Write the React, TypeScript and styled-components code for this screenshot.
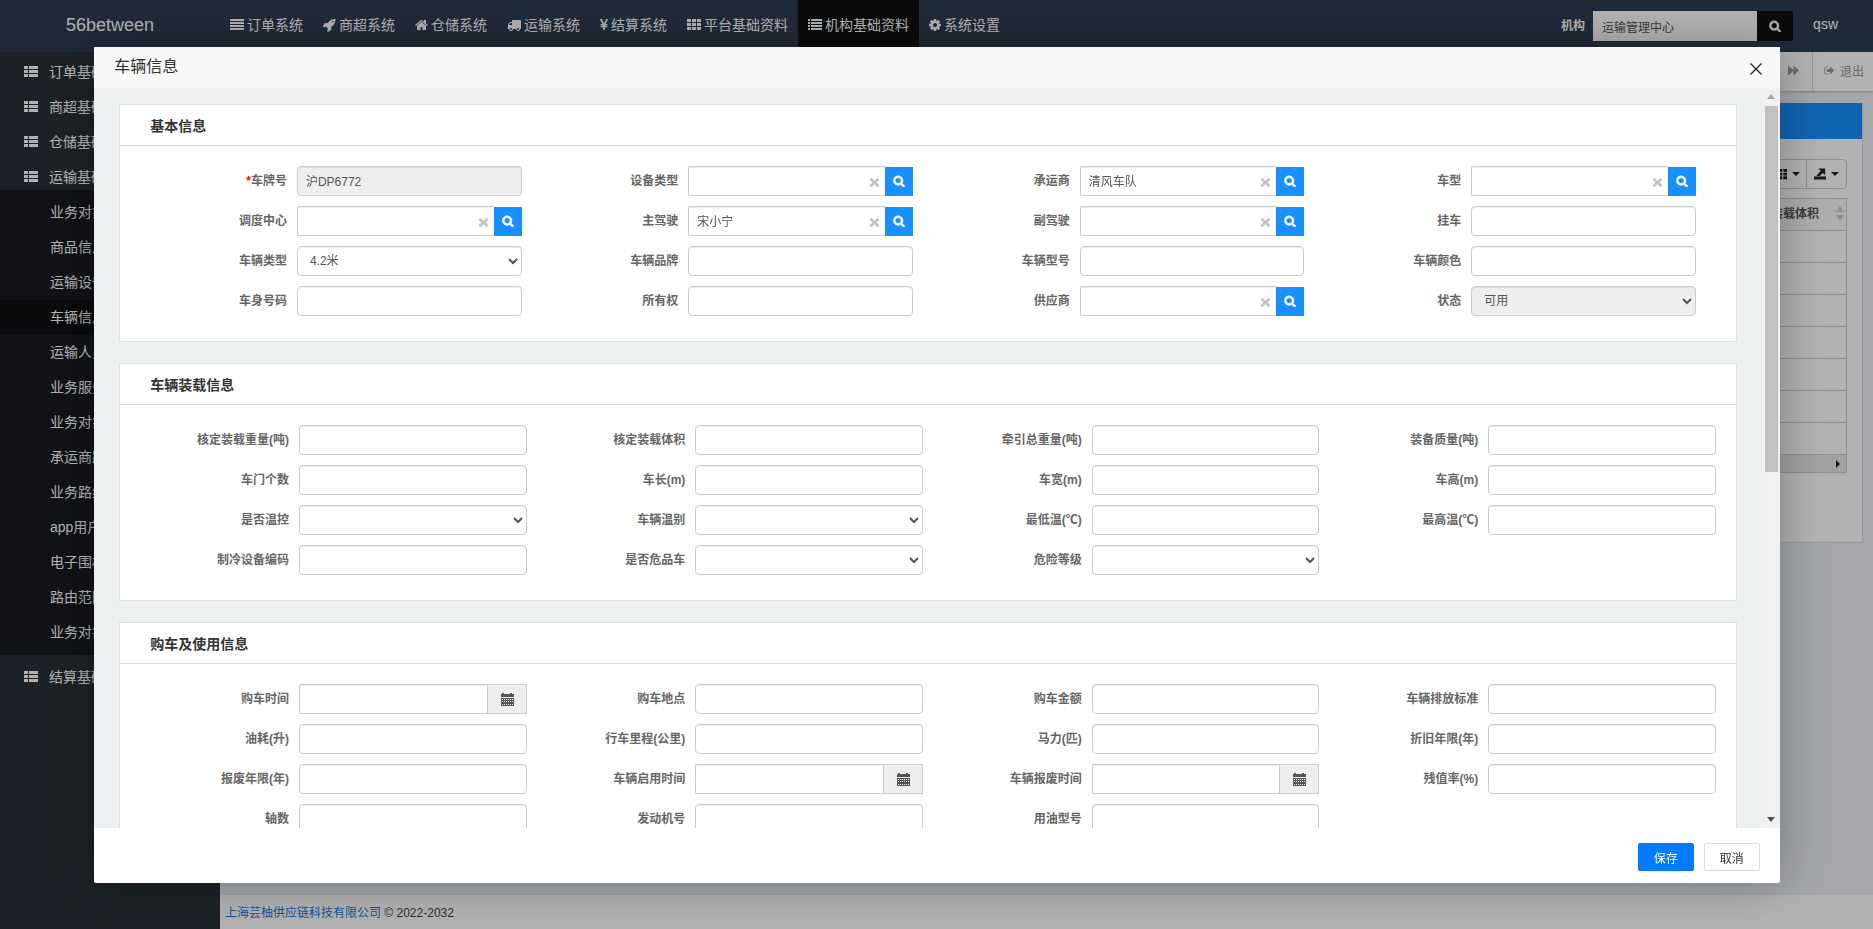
import React, { useState } from "react";
import styled, { createGlobalStyle, css } from "styled-components";

const GlobalStyle = createGlobalStyle`
  * { box-sizing: border-box; }
  body {
    margin: 0;
    font-family: "Liberation Sans", "Noto Sans CJK SC", sans-serif;
    font-size: 12px;
    line-height: 20px;
    color: #333;
    overflow: hidden;
  }
  input, select, button { font-family: inherit; font-size: 12px; }
  ul { list-style: none; margin: 0; padding: 0; }
  a { text-decoration: none; color: inherit; }
`;

/* ---------- icons ---------- */

const PATHS: Record<string, string> = {
  search:
    "M1216 832q0-185-131.5-316.5t-316.5-131.5-316.5 131.5-131.5 316.5 131.5 316.5 316.5 131.5 316.5-131.5 131.5-316.5zm512 832q0 52-38 90t-90 38q-54 0-90-38l-343-342q-179 124-399 124-143 0-273.5-55.5t-225-150-150-225-55.5-273.5 55.5-273.5 150-225 225-150 273.5-55.5 273.5 55.5 225 150 150 225 55.5 273.5q0 220-124 399l343 343q37 37 37 90z",
  lines:
    "M0 128h1792v256H0zM0 512h1792v256H0zM0 896h1792v256H0zM0 1280h1792v256H0z",
  rocket:
    "M1440 448q0-40-28-68t-68-28-68 28-28 68 28 68 68 28 68-28 28-68zm224-288q0 249-75.5 430.5t-253.5 360.5q-81 80-195 176l-20 379q-2 16-16 26l-384 224q-7 4-16 4-12 0-23-9l-64-64q-13-14-8-32l85-276-281-281-276 85q-3 1-9 1-14 0-23-9l-64-64q-17-19-5-39l224-384q10-14 26-16l379-20q96-114 176-195 188-187 358-258t431-71q14 0 24 9.5t10 22.5z",
  home:
    "M1472 992v480q0 26-19 45t-45 19h-384v-384h-256v384h-384q-26 0-45-19t-19-45v-480q0-1 .5-3t.5-3l575-474 575 474q1 2 1 6zm223-69l-62 74q-8 9-21 11h-3q-13 0-21-7l-692-577-692 577q-12 8-24 7-13-2-21-11l-62-74q-8-10-7-23.5t11-21.5l719-599q32-26 76-26t76 26l244 204v-195q0-14 9-23t23-9h192q14 0 23 9t9 23v408l219 182q10 8 11 21.5t-7 23.5z",
  truck:
    "M640 1408q0-52-38-90t-90-38-90 38-38 90 38 90 90 38 90-38 38-90zm-384-512h384v-256h-158q-13 0-22 9l-195 195q-9 9-9 22v30zm1280 512q0-52-38-90t-90-38-90 38-38 90 38 90 90 38 90-38 38-90zm256-1088v1024q0 15-4 26.5t-13.5 18.5-16.5 11.5-23.5 6-22.5 2-25.5 0-22.5-.5q0 106-75 181t-181 75-181-75-75-181h-384q0 106-75 181t-181 75-181-75-75-181h-64q-3 0-22.5.5t-25.5 0-22.5-2-23.5-6-16.5-11.5-13.5-18.5-4-26.5q0-26 19-45t45-19v-320q0-8-.5-35t0-38 2.5-34.5 6.5-37 14-30.5 22.5-30l198-198q19-19 50.5-32t58.5-13h160v-192q0-26 19-45t45-19h1024q26 0 45 19t19 45z",
  yen:
    "M985.5 1536h-172q-13 0-22.5-9t-9.5-23v-330h-288q-13 0-22.5-9t-9.5-23v-103q0-13 9.5-22.5t22.5-9.5h288v-85h-288q-13 0-22.5-9t-9.5-23v-104q0-13 9.5-22.5t22.5-9.5h214l-321-578q-8-16 0-32 10-16 28-16h194q19 0 29 18l215 425q19 38 56 125 10-24 30.5-68t27.5-61l191-420q8-19 29-19h191q17 0 27 16 9 14 1 31l-313 579h215q13 0 22.5 9.5t9.5 22.5v104q0 14-9.5 23t-22.5 9h-290v85h290q13 0 22.5 9.5t9.5 22.5v103q0 14-9.5 23t-22.5 9h-290v330q0 13-9.5 22.5t-22.5 9.5z",
  grid:
    "M0 128h512v384H0zM640 128h512v384H640zM1280 128h512v384h-512zM0 640h512v384H0zM640 640h512v384H640zM1280 640h512v384h-512zM0 1152h512v384H0zM640 1152h512v384H640zM1280 1152h512v384h-512z",
  list:
    "M0 128h256v256H0zM384 128h1408v256H384zM0 512h256v256H0zM384 512h1408v256H384zM0 896h256v256H0zM384 896h1408v256H384zM0 1280h256v256H0zM384 1280h1408v256H384z",
  rows:
    "M0 128h512v384H0zM640 128h1152v384H640zM0 640h512v384H0zM640 640h1152v384H640zM0 1152h512v384H0zM640 1152h1152v384H640z",
  cog:
    "M1152 896q0-106-75-181t-181-75-181 75-75 181 75 181 181 75 181-75 75-181zm512-109v222q0 12-8 23t-20 13l-185 28q-19 54-39 91 35 50 107 138 10 12 10 25t-9 23q-27 37-99 108t-94 71q-12 0-26-9l-138-108q-44 23-91 38-16 136-29 186-7 28-36 28h-222q-14 0-24.5-8.5t-11.5-21.5l-28-184q-49-16-90-37l-141 107q-10 9-25 9-14 0-25-11-126-114-165-168-7-10-7-23 0-12 8-23 15-21 51-66.5t54-70.5q-27-50-41-99l-183-27q-13-2-21-12.5t-8-23.5v-222q0-12 8-23t19-13l186-28q14-46 39-92-40-57-107-138-10-12-10-24 0-10 9-23 26-36 98.5-107.5t94.5-71.5q13 0 26 10l138 107q44-23 91-38 16-136 29-186 7-28 36-28h222q14 0 24.5 8.5t11.5 21.5l28 184q49 16 90 37l142-107q9-9 24-9 13 0 25 10 129 119 165 170 7 8 7 22 0 12-8 23-15 21-51 66.5t-54 70.5q26 50 41 98l183 28q13 2 21 12.5t8 23.5z",
  signOut:
    "M704 1440q0 4 1 20t.5 26.5-3 23.5-10 19.5-20.5 6.5h-320q-119 0-203.5-84.5t-84.5-203.5v-704q0-119 84.5-203.5t203.5-84.5h320q13 0 22.5 9.5t9.5 22.5q0 4 1 20t.5 26.5-3 23.5-10 19.5-20.5 6.5h-320q-66 0-113 47t-47 113v704q0 66 47 113t113 47h312l11.5 1 11.5 3 8 5.5 7 9 2 13.5zm928-544q0 26-19 45l-544 544q-19 19-45 19t-45-19-19-45v-288h-448q-26 0-45-19t-19-45v-384q0-26 19-45t45-19h448v-288q0-26 19-45t45-19 45 19l544 544q19 19 19 45z",
  forward: "M128 192L896 832V192L1664 896L896 1600V960L128 1600z",
  times:
    "M380 140L896 600L1412 140L1720 450L1210 896L1720 1342L1412 1652L896 1192L380 1652L72 1342L582 896L72 450z",
  calendar: [
    "M128 256h128v-128h256v128h768v-128h256v128h256v384H128z",
    "M128 768h1664v1024H128z",
    ...[896, 1152, 1536].flatMap((y) =>
      [256, 512, 768, 1024, 1280, 1536].map((x) => `M${x} ${y}v128h128v-128z`)
    ),
  ].join(""),
  exportArrow:
    "M0 1280h1792v448H0zM640 64h1024v1024L1312 736L864 1184H352L992 416z",
};

const IconSvg = styled.svg<{ $heavy?: boolean }>`
  display: block;
  flex: none;
  fill: currentColor;
  fill-rule: evenodd;
  stroke: currentColor;
  stroke-width: ${(p) => (p.$heavy ? 110 : 0)};
`;

interface IconProps {
  name: string;
  size?: number;
  width?: number;
  heavy?: boolean;
}

function Icon({ name, size = 14, width, heavy }: IconProps) {
  const w = width ?? size;
  const span = (1792 * w) / size;
  return (
    <IconSvg
      width={w}
      height={size}
      viewBox={`${(1792 - span) / 2} 0 ${span} 1792`}
      $heavy={heavy}
      aria-hidden="true"
    >
      <path d={PATHS[name]} />
    </IconSvg>
  );
}

/* ---------- page behind the dialog ---------- */

const Page = styled.div`
  display: flex;
  flex-direction: column;
  height: 100vh;
`;

const Header = styled.header`
  display: flex;
  flex: none;
  height: 52px;
  padding-right: 35px;
  background: #2c3e50;
  color: #fff;
`;

const Brand = styled.a`
  width: 220px;
  line-height: 50px;
  font-size: 18px;
  text-align: center;
`;

const TopNav = styled.nav`
  display: flex;
  flex: 1;
`;

const TopLink = styled.a<{ $active?: boolean }>`
  display: flex;
  align-items: center;
  gap: 3px;
  height: 50px;
  padding: 0 10px;
  font-size: 14px;
  background: ${(p) => (p.$active ? "#101010" : "transparent")};
`;

const OrgSearch = styled.form`
  display: flex;
  align-items: center;
  height: 52px;
`;

const OrgLabel = styled.label`
  margin-right: 8px;
  font-weight: bold;
`;

const OrgInput = styled.input`
  width: 164px;
  height: 30px;
  padding: 0 9px;
  border: 0;
  background: #fff;
  color: #555;
`;

const OrgButton = styled.button`
  display: flex;
  align-items: center;
  justify-content: center;
  width: 36px;
  height: 30px;
  padding: 0;
  border: 0;
  border-radius: 0 3px 3px 0;
  background: #101010;
  color: #fff;
`;

const User = styled.a`
  margin-left: 20px;
  line-height: 48px;
  font-size: 14px;
`;

const Body = styled.div`
  display: flex;
  flex: 1;
  min-height: 0;
`;

const Sidebar = styled.nav`
  width: 220px;
  flex: none;
  padding-top: 7px;
  background: #263238;
  color: #fff;
  font-size: 14px;
`;

const Groups = styled.ul`
  display: flex;
  flex-direction: column;
  gap: 9px;
`;

const GroupLink = styled.a`
  display: flex;
  align-items: center;
  gap: 11px;
  height: 26px;
  padding-left: 24px;
`;

const SubMenu = styled.ul`
  padding: 5px 0;
  background: #181b20;
`;

const SubLink = styled.a<{ $active?: boolean }>`
  display: block;
  padding-left: 50px;
  line-height: 35px;
  background: ${(p) => (p.$active ? "#0e0f12" : "transparent")};
`;

const Main = styled.main`
  display: flex;
  flex: 1;
  flex-direction: column;
  min-width: 0;
  background: #ecf0f5;
`;

const TabStrip = styled.div`
  display: flex;
  justify-content: flex-end;
  flex: none;
  height: 39px;
  background: #fff;
  box-shadow: 0 1px 2px rgba(0, 0, 0, 0.25);
  color: #999;
`;

const TabButton = styled.button`
  display: flex;
  align-items: center;
  gap: 5px;
  padding: 0 9px 3px 11px;
  border: 0;
  border-left: 1px solid #ddd;
  background: transparent;
  color: inherit;
`;

const ScrollTabsButton = styled(TabButton)`
  width: 40px;
  justify-content: center;
`;

const Content = styled.div`
  flex: 1;
  padding: 12px 10px;
`;

const Box = styled.section`
  height: 440px;
  border: 1px solid #ddd;
  border-top: 0;
  background: #fff;
`;

const BoxBar = styled.div`
  height: 36px;
  background: #1890ff;
`;

const BoxBody = styled.div`
  padding: 20px 15px;
`;

const Tools = styled.div`
  display: flex;
  justify-content: flex-end;
  margin-bottom: 9px;
`;

const ToolButton = styled.button`
  display: flex;
  align-items: center;
  justify-content: center;
  gap: 5px;
  width: 41px;
  height: 30px;
  margin-left: -1px;
  padding: 0;
  border: 1px solid #ccc;
  background: #fff;
  color: #222;

  &:last-child {
    border-radius: 0 4px 4px 0;
  }
`;

const Caret = styled.span`
  border: 4px solid transparent;
  border-bottom: 0;
  border-top-color: #222;
`;

const Grid = styled.table`
  width: 100%;
  border-collapse: collapse;
  border: 1px solid #ccc;

  th,
  td {
    height: 32px;
    padding: 0;
    border-bottom: 1px solid #ccc;
  }
  th {
    background: #f9f9f9;
    color: #555;
  }
`;

const HeadCell = styled.div`
  display: flex;
  align-items: center;
  justify-content: flex-end;
  gap: 17px;
  padding: 0 2px 2px 0;
`;

const SortMark = styled.span`
  display: flex;
  flex-direction: column;
  gap: 3px;

  &::before,
  &::after {
    content: "";
    border: 4px solid transparent;
  }
  &::before {
    border-top: 0;
    border-bottom: 6px solid #ccc;
  }
  &::after {
    border-bottom: 0;
    border-top: 6px solid #ccc;
  }
`;

const GridScroll = styled.div`
  display: flex;
  align-items: center;
  justify-content: flex-end;
  height: 18px;
  padding-right: 6px;
  border: 1px solid #ccc;
  border-top: 0;
  background: #e8e8e8;

  &::after {
    content: "";
    border: 4px solid transparent;
    border-right: 0;
    border-left-color: #222;
  }
`;

const Footer = styled.footer`
  flex: none;
  height: 35px;
  padding-left: 5px;
  line-height: 36px;
  border-top: 1px solid #eee;
  background: #fff;
  color: #444;

  a {
    color: #1f77d0;
  }
`;

/* ---------- dialog ---------- */

const Shade = styled.div`
  position: fixed;
  inset: 0;
  display: flex;
  align-items: center;
  justify-content: center;
  padding: 1px 0 0 1px;
  background: rgba(0, 0, 0, 0.3);
`;

const Dialog = styled.div`
  display: flex;
  flex-direction: column;
  width: 90vw;
  height: 90vh;
  border-radius: 2px;
  background: #fff;
  box-shadow: 1px 1px 50px rgba(0, 0, 0, 0.3);
`;

const DialogHead = styled.div`
  display: flex;
  align-items: center;
  justify-content: space-between;
  flex: none;
  height: 41px;
  padding: 0 18px 0 20px;
  background: #f8f8f8;
`;

const DialogTitle = styled.h2`
  margin: 0;
  font-size: 16px;
  font-weight: normal;
`;

const CloseButton = styled.button`
  display: flex;
  padding: 3px 0 0;
  border: 0;
  background: transparent;
  color: #222;
`;

const DialogBody = styled.div`
  display: flex;
  flex: 1;
  min-height: 0;
`;

const Scroller = styled.div`
  flex: 1;
  min-width: 0;
  overflow-y: auto;
  scrollbar-width: none;
  padding: 16px 25px;
  background: #ecf0f1;
`;

const ScrollBar = styled.div`
  display: flex;
  flex-direction: column;
  flex: none;
  width: 18px;
  padding: 0 2px 0 3px;
  background: #f1f1f1;
`;

const ScrollArrow = styled.span<{ $down?: boolean }>`
  display: flex;
  align-items: center;
  justify-content: center;
  height: 18px;

  &::before {
    content: "";
    border: 4px solid transparent;
    ${(p) =>
      p.$down
        ? "border-bottom: 0; border-top: 5px solid #505050;"
        : "border-top: 0; border-bottom: 5px solid #a3a3a3;"}
  }
`;

const ScrollTrack = styled.div`
  flex: 1;
`;

const ScrollThumb = styled.div`
  height: 52%;
  background: #c1c1c1;
`;

const Sections = styled.form`
  display: flex;
  flex-direction: column;
  gap: 21px;
  min-height: 1390px;
`;

const Panel = styled.fieldset`
  min-width: 0;
  margin: 0;
  padding: 0;
  border: 1px solid #dfe2e4;
  background: #fff;
`;

const PanelTitle = styled.h3`
  margin: 0;
  padding: 11px 30px 9px;
  line-height: 20px;
  border-bottom: 1px solid #ddd;
  font-size: 14px;
  font-weight: bold;
`;

const Fields = styled.div<{ $wide?: boolean }>`
  display: grid;
  grid-template-columns: repeat(4, 1fr);
  row-gap: 10px;
  padding: ${(p) => (p.$wide ? "20px 15px 25px" : "20px 25px 25px")};
`;

const FieldRow = styled.div<{ $wide?: boolean }>`
  display: grid;
  grid-template-columns: ${(p) => (p.$wide ? "154fr 228fr" : "142fr 225fr")};
  column-gap: 10px;
  align-items: center;
  padding-right: ${(p) => (p.$wide ? "5px" : "15px")};
`;

const Label = styled.label`
  text-align: right;
  font-weight: bold;
  color: #666;
`;

const Star = styled.span`
  color: #f00;
`;

const controlStyle = css`
  width: 100%;
  min-width: 0;
  height: 30px;
  border: 1px solid #ccc;
  border-radius: 4px;
  background: #fff;
  color: #555;
  box-shadow: inset 0 1px 1px rgba(0, 0, 0, 0.075);

  &:disabled {
    background: #eee;
    opacity: 1;
  }
`;

const TextInput = styled.input<{ $joined?: boolean }>`
  ${controlStyle}
  padding: 0 8px;
  ${(p) => p.$joined && "flex: 1; border-radius: 2px 0 0 2px; border-right: 0;"}
`;

const Select = styled.select`
  ${controlStyle}
  padding: 0 8px;
`;

const Joined = styled.div`
  position: relative;
  display: flex;
  align-items: flex-end;
`;

const ClearButton = styled.button`
  position: absolute;
  top: 11px;
  right: 33px;
  display: flex;
  padding: 0;
  border: 0;
  background: transparent;
  color: #c4c4c4;
`;

const LookupButton = styled.button`
  display: flex;
  align-items: center;
  justify-content: center;
  flex: none;
  width: 28px;
  height: 29px;
  padding: 0 0 1px;
  border: 0;
  background: #1890ff;
  color: #fff;
`;

const DateButton = styled.button`
  display: flex;
  align-items: center;
  justify-content: center;
  flex: none;
  width: 40px;
  height: 30px;
  padding: 0;
  border: 1px solid #ccc;
  background: #eee;
  color: #555;
`;

const DialogFoot = styled.div`
  display: flex;
  justify-content: flex-end;
  gap: 10px;
  flex: none;
  height: 55px;
  padding: 15px 20px 0 0;
`;

const FootButton = styled.button<{ $primary?: boolean }>`
  width: 56px;
  height: 28px;
  padding: 0;
  border: 1px solid ${(p) => (p.$primary ? "#007bff" : "#dedede")};
  border-radius: 2px;
  background: ${(p) => (p.$primary ? "#007bff" : "#fff")};
  color: ${(p) => (p.$primary ? "#fff" : "#333")};
`;

type Kind = "text" | "lookup" | "select" | "date";
interface FieldDef {
  label: string;
  kind?: Kind;
  value?: string;
  required?: boolean;
  disabled?: boolean;
}

function Field({ def, id, wide }: { def: FieldDef; id: string; wide?: boolean }) {
  const { label, kind = "text", value = "", required, disabled } = def;
  return (
    <FieldRow $wide={wide}>
      <Label htmlFor={id}>
        {required && <Star>*</Star>}
        {label}
      </Label>
      {kind === "text" && <TextInput id={id} defaultValue={value} disabled={disabled} />}
      {kind === "select" && (
        <Select id={id} defaultValue={value} disabled={disabled}>
          <option value={value}>{value}</option>
        </Select>
      )}
      {kind === "lookup" && (
        <Joined>
          <TextInput id={id} defaultValue={value} $joined />
          <ClearButton type="button" aria-label="清除">
            <Icon name="times" size={11} />
          </ClearButton>
          <LookupButton type="button" aria-label="查找">
            <Icon name="search" size={12} heavy />
          </LookupButton>
        </Joined>
      )}
      {kind === "date" && (
        <Joined>
          <TextInput id={id} defaultValue={value} $joined />
          <DateButton type="button" aria-label="选择日期">
            <Icon name="calendar" size={14} />
          </DateButton>
        </Joined>
      )}
    </FieldRow>
  );
}

const SECTIONS: { title: string; wide?: boolean; fields: FieldDef[] }[] = [
  {
    title: "基本信息",
    fields: [
      { label: "车牌号", value: "沪DP6772", required: true, disabled: true },
      { label: "设备类型", kind: "lookup" },
      { label: "承运商", kind: "lookup", value: "清风车队" },
      { label: "车型", kind: "lookup" },
      { label: "调度中心", kind: "lookup" },
      { label: "主驾驶", kind: "lookup", value: "宋小宁" },
      { label: "副驾驶", kind: "lookup" },
      { label: "挂车" },
      { label: "车辆类型", kind: "select", value: "4.2米" },
      { label: "车辆品牌" },
      { label: "车辆型号" },
      { label: "车辆颜色" },
      { label: "车身号码" },
      { label: "所有权" },
      { label: "供应商", kind: "lookup" },
      { label: "状态", kind: "select", value: "可用", disabled: true },
    ],
  },
  {
    title: "车辆装载信息",
    wide: true,
    fields: [
      { label: "核定装载重量(吨)" },
      { label: "核定装载体积" },
      { label: "牵引总重量(吨)" },
      { label: "装备质量(吨)" },
      { label: "车门个数" },
      { label: "车长(m)" },
      { label: "车宽(m)" },
      { label: "车高(m)" },
      { label: "是否温控", kind: "select" },
      { label: "车辆温别", kind: "select" },
      { label: "最低温(℃)" },
      { label: "最高温(℃)" },
      { label: "制冷设备编码" },
      { label: "是否危品车", kind: "select" },
      { label: "危险等级", kind: "select" },
    ],
  },
  {
    title: "购车及使用信息",
    wide: true,
    fields: [
      { label: "购车时间", kind: "date" },
      { label: "购车地点" },
      { label: "购车金额" },
      { label: "车辆排放标准" },
      { label: "油耗(升)" },
      { label: "行车里程(公里)" },
      { label: "马力(匹)" },
      { label: "折旧年限(年)" },
      { label: "报废年限(年)" },
      { label: "车辆启用时间", kind: "date" },
      { label: "车辆报废时间", kind: "date" },
      { label: "残值率(%)" },
      { label: "轴数" },
      { label: "发动机号" },
      { label: "用油型号" },
    ],
  },
];

const TOP_LINKS = [
  { icon: "lines", width: 14, text: "订单系统" },
  { icon: "rocket", width: 13, text: "商超系统" },
  { icon: "home", width: 13, text: "仓储系统" },
  { icon: "truck", width: 14, text: "运输系统" },
  { icon: "yen", width: 8, text: "结算系统" },
  { icon: "grid", width: 14, text: "平台基础资料" },
  { icon: "list", width: 14, text: "机构基础资料", active: true },
  { icon: "cog", width: 12, text: "系统设置" },
];

const SUB_LINKS = [
  "业务对象",
  "商品信息",
  "运输设备",
  "车辆信息",
  "运输人员",
  "业务服务",
  "业务对象",
  "承运商路",
  "业务路线",
  "app用户",
  "电子围栏",
  "路由范围",
  "业务对象",
];

const GROUPS: { text: string; items?: string[] }[] = [
  { text: "订单基础" },
  { text: "商超基础" },
  { text: "仓储基础" },
  { text: "运输基础", items: SUB_LINKS },
  { text: "结算基础" },
];

export default function App() {
  const [thumbTop, setThumbTop] = useState(0);

  const onScroll = (e: React.UIEvent<HTMLDivElement>) => {
    const el = e.currentTarget;
    const track = el.clientHeight - 36;
    setThumbTop((el.scrollTop / (el.scrollHeight - el.clientHeight)) * track * 0.48);
  };

  return (
    <>
      <GlobalStyle />
      <Page>
        <Header>
          <Brand href="#">56between</Brand>
          <TopNav>
            {TOP_LINKS.map((l) => (
              <TopLink key={l.text} href="#" $active={l.active}>
                <Icon name={l.icon} width={l.width} />
                {l.text}
              </TopLink>
            ))}
          </TopNav>
          <OrgSearch>
            <OrgLabel htmlFor="org">机构</OrgLabel>
            <OrgInput id="org" defaultValue="运输管理中心" />
            <OrgButton type="button" aria-label="查找机构">
              <Icon name="search" size={12} heavy />
            </OrgButton>
          </OrgSearch>
          <User href="#">qsw</User>
        </Header>
        <Body>
          <Sidebar>
            <Groups>
              {GROUPS.map((g) => (
                <li key={g.text}>
                  <GroupLink href="#">
                    <Icon name="rows" />
                    {g.text}
                  </GroupLink>
                  {g.items && (
                    <SubMenu>
                      {g.items.map((t, i) => (
                        <li key={i}>
                          <SubLink href="#" $active={t === "车辆信息"}>
                            {t}
                          </SubLink>
                        </li>
                      ))}
                    </SubMenu>
                  )}
                </li>
              ))}
            </Groups>
          </Sidebar>
          <Main>
            <TabStrip>
              <ScrollTabsButton type="button" aria-label="向右滚动">
                <Icon name="forward" size={13} />
              </ScrollTabsButton>
              <TabButton type="button">
                <Icon name="signOut" size={11} />
                退出
              </TabButton>
            </TabStrip>
            <Content>
              <Box>
                <BoxBar />
                <BoxBody>
                  <Tools>
                    <ToolButton type="button" aria-label="列">
                      <Icon name="grid" size={13} />
                      <Caret />
                    </ToolButton>
                    <ToolButton type="button" aria-label="导出">
                      <Icon name="exportArrow" size={12} />
                      <Caret />
                    </ToolButton>
                  </Tools>
                  <Grid>
                    <thead>
                      <tr>
                        <th>
                          <HeadCell>
                            核定装载体积
                            <SortMark />
                          </HeadCell>
                        </th>
                      </tr>
                    </thead>
                    <tbody>
                      {Array.from({ length: 7 }, (_, i) => (
                        <tr key={i}>
                          <td />
                        </tr>
                      ))}
                    </tbody>
                  </Grid>
                  <GridScroll />
                </BoxBody>
              </Box>
            </Content>
            <Footer>
              <a href="#">上海芸柚供应链科技有限公司</a> © 2022-2032
            </Footer>
          </Main>
        </Body>
      </Page>
      <Shade>
        <Dialog role="dialog" aria-modal="true" aria-labelledby="dialog-title">
          <DialogHead>
            <DialogTitle id="dialog-title">车辆信息</DialogTitle>
            <CloseButton type="button" aria-label="关闭">
              <svg width="12" height="12" viewBox="0 0 12 12" stroke="currentColor" strokeWidth="1.3">
                <path d="M0.5 0.5L11.5 11.5M11.5 0.5L0.5 11.5" />
              </svg>
            </CloseButton>
          </DialogHead>
          <DialogBody>
            <Scroller onScroll={onScroll}>
              <Sections>
                {SECTIONS.map((s, si) => (
                  <Panel key={s.title} aria-label={s.title}>
                    <PanelTitle>{s.title}</PanelTitle>
                    <Fields $wide={s.wide}>
                      {s.fields.map((f, fi) => (
                        <Field key={f.label} def={f} id={`field-${si}-${fi}`} wide={s.wide} />
                      ))}
                    </Fields>
                  </Panel>
                ))}
              </Sections>
            </Scroller>
            <ScrollBar aria-hidden="true">
              <ScrollArrow />
              <ScrollTrack>
                <ScrollThumb style={{ marginTop: thumbTop }} />
              </ScrollTrack>
              <ScrollArrow $down />
            </ScrollBar>
          </DialogBody>
          <DialogFoot>
            <FootButton type="button" $primary>
              保存
            </FootButton>
            <FootButton type="button">取消</FootButton>
          </DialogFoot>
        </Dialog>
      </Shade>
    </>
  );
}
